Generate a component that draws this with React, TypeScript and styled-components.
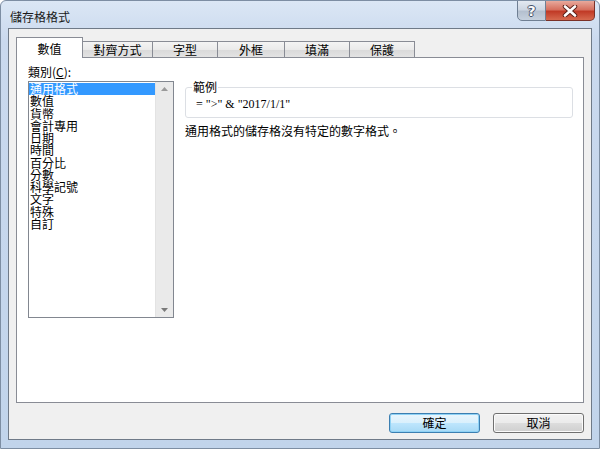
import React from "react";
import styled, { createGlobalStyle } from "styled-components";

const Global = createGlobalStyle`
  html, body { margin: 0; padding: 0; background: #ffffff; }
  body { font-family: "Noto Sans CJK TC", "Noto Sans", sans-serif; font-size: 12px; color: #000; }
  * { box-sizing: border-box; }
`;

const Window = styled.div`
  width: 600px;
  height: 449px;
  display: flex;
  flex-direction: column;
  border: 1px solid #7d8ea3;
  border-radius: 6px 6px 0 0;
  background: linear-gradient(to bottom, #dbe7f5 0px, #cad9ee 40px, #c1d4eb 100%);
  overflow: hidden;
`;

const TitleBar = styled.div`
  height: 27px;
  flex: none;
  display: flex;
  align-items: flex-start;
  justify-content: space-between;
  padding: 0 4px 0 9px;
`;

const Title = styled.div`
  font-size: 12px;
  line-height: 14px;
  margin-top: 9px;
  color: #1a1a1a;
`;

const Caption = styled.div`
  display: flex;
  margin-top: -1px;
`;

const CapButton = styled.div<{ $kind: "help" | "close" }>`
  height: 21px;
  width: ${(p) => (p.$kind === "close" ? "49px" : "29px")};
  display: flex;
  align-items: center;
  justify-content: center;
  border: 1px solid ${(p) => (p.$kind === "close" ? "#7a3128" : "#6f7f93")};
  border-left-width: ${(p) => (p.$kind === "close" ? "0" : "1px")};
  border-radius: ${(p) => (p.$kind === "close" ? "0 0 5px 0" : "0 0 0 5px")};
  background: ${(p) =>
    p.$kind === "close"
      ? "linear-gradient(to bottom, #e8a99c 0%, #d6705f 45%, #c13b27 55%, #d66a4f 100%)"
      : "linear-gradient(to bottom, #e3e9f1 0%, #cdd6e2 45%, #b4c0cf 55%, #c6d1de 100%)"};
  color: #fff;
`;

const HelpGlyph = styled.span`
  font-family: "DejaVu Sans", sans-serif;
  font-weight: bold;
  font-size: 14px;
  line-height: 14px;
  color: #fbfbfb;
  text-shadow: 1px 0 0 #46526a, -1px 0 0 #46526a, 0 1px 0 #46526a, 0 -1px 0 #46526a;
`;

const Body = styled.div`
  flex: 1;
  margin: 0 7px 8px 7px;
  border: 1px solid #6f7a88;
  background: #f0f0f0;
  padding: 8px 7px 0 7px;
  display: flex;
  flex-direction: column;
`;

const TabStrip = styled.div`
  display: flex;
  align-items: flex-end;
  height: 21px;
  position: relative;
  z-index: 1;
  margin-bottom: -1px;
`;

const Tab = styled.div<{ $active?: boolean; $w: number }>`
  width: ${(p) => p.$w}px;
  height: ${(p) => (p.$active ? "21px" : "17px")};
  margin-left: -1px;
  &:first-child { margin-left: 0; }
  display: flex;
  align-items: center;
  justify-content: center;
  border: 1px solid #898c95;
  border-bottom: ${(p) => (p.$active ? "none" : "1px solid #898c95")};
  background: ${(p) =>
    p.$active ? "#ffffff" : "linear-gradient(to bottom, #f4f4f4 0%, #eaeaea 50%, #d9d9d9 51%, #e3e3e3 100%)"};
  font-size: 12px;
  line-height: 14px;
  padding-top: ${(p) => (p.$active ? "1px" : "0")};
  position: relative;
  z-index: ${(p) => (p.$active ? 2 : 1)};
`;

const Panel = styled.div`
  height: 346px;
  border: 1px solid #898c95;
  background: #ffffff;
  padding: 7px 10px 0 11px;
  display: grid;
  grid-template-columns: 146px 1fr;
  column-gap: 11px;
  align-items: start;
`;

const LeftCol = styled.div`
  display: flex;
  flex-direction: column;
`;

const Label = styled.div`
  line-height: 14px;
  font-size: 12px;
  u { text-decoration: underline; }
`;

const ListBox = styled.div`
  margin-top: 2px;
  height: 237px;
  border: 1px solid #828790;
  display: flex;
  background: #fff;
`;

const Items = styled.div`
  flex: 1;
  padding-top: 1px;
  display: flex;
  flex-direction: column;
`;

const Item = styled.div<{ $sel?: boolean }>`
  height: 12.25px;
  line-height: 12px;
  font-size: 12px;
  padding-left: 1px;
  background: ${(p) => (p.$sel ? "#3399ff" : "transparent")};
  color: ${(p) => (p.$sel ? "#ffffff" : "#000000")};
  white-space: nowrap;
`;

const ScrollBar = styled.div`
  width: 18px;
  background: #eaeaea;
  border-left: 1px solid #e3e3e3;
  display: flex;
  flex-direction: column;
  justify-content: space-between;
  align-items: center;
  padding: 5px 0 5px;
`;

const RightCol = styled.div`
  margin-top: 15px;
  display: flex;
  flex-direction: column;
`;

const Group = styled.fieldset`
  margin: 0;
  padding: 0 6px 6px 6px;
  border: 1px solid #dcdfe4;
  border-radius: 3px;
  min-width: 0;
`;

const Legend = styled.legend`
  padding: 0 1px;
  line-height: 14px;
  font-size: 12px;
`;

const Sample = styled.div`
  margin-top: 3px;
  margin-left: 4px;
  font-family: "Liberation Serif", "Times New Roman", serif;
  font-size: 12px;
  line-height: 14px;
`;

const Desc = styled.div`
  margin-top: 6px;
  line-height: 14px;
  font-size: 12px;
`;

const ButtonRow = styled.div`
  display: flex;
  justify-content: flex-end;
  gap: 13px;
  margin-top: 10px;
`;

const Button = styled.div<{ $default?: boolean }>`
  width: 91px;
  height: 20px;
  display: flex;
  align-items: center;
  justify-content: center;
  border-radius: 3px;
  border: 1px solid ${(p) => (p.$default ? "#3c7fb1" : "#707070")};
  box-shadow: inset 0 0 0 1px ${(p) => (p.$default ? "#8fd2f5" : "#fbfbfb")};
  background: ${(p) =>
    p.$default
      ? "linear-gradient(to bottom, #eaf6fd 0%, #d9f0fc 50%, #bee6fd 51%, #a7d9f5 100%)"
      : "linear-gradient(to bottom, #f2f2f2 0%, #ebebeb 50%, #dddddd 51%, #cfcfcf 100%)"};
  font-size: 12px;
  line-height: 14px;
`;

const items = ["通用格式", "數值", "貨幣", "會計專用", "日期", "時間", "百分比", "分數", "科學記號", "文字", "特殊", "自訂"];
const tabs: [string, number][] = [
  ["數值", 67],
  ["對齊方式", 71],
  ["字型", 66],
  ["外框", 68],
  ["填滿", 66],
  ["保護", 66],
];

export default function App() {
  return (
    <>
      <Global />
      <Window>
        <TitleBar>
          <Title>儲存格格式</Title>
          <Caption>
            <CapButton $kind="help">
              <HelpGlyph>?</HelpGlyph>
            </CapButton>
            <CapButton $kind="close">
              <svg width="16" height="12" viewBox="0 0 16 12">
                <path d="M3 1.5 L13 10.5 M13 1.5 L3 10.5" stroke="#5a2018" strokeWidth="4.5" strokeLinecap="round" />
                <path d="M3 1.5 L13 10.5 M13 1.5 L3 10.5" stroke="#ffffff" strokeWidth="2.6" strokeLinecap="round" />
              </svg>
            </CapButton>
          </Caption>
        </TitleBar>
        <Body>
          <TabStrip>
            {tabs.map(([t, w], i) => (
              <Tab key={t} $active={i === 0} $w={w}>
                {t}
              </Tab>
            ))}
          </TabStrip>
          <Panel>
            <LeftCol>
              <Label>
                類別(<u>C</u>):
              </Label>
              <ListBox>
                <Items>
                  {items.map((it, i) => (
                    <Item key={it} $sel={i === 0}>
                      {it}
                    </Item>
                  ))}
                </Items>
                <ScrollBar>
                  <svg width="7" height="4" viewBox="0 0 7 4">
                    <path d="M0 4 L3.5 0 L7 4 Z" fill="#9a9a9a" />
                  </svg>
                  <svg width="7" height="4" viewBox="0 0 7 4">
                    <path d="M0 0 L3.5 4 L7 0 Z" fill="#7a7a7a" />
                  </svg>
                </ScrollBar>
              </ListBox>
            </LeftCol>
            <RightCol>
              <Group>
                <Legend>範例</Legend>
                <Sample>= "&gt;" &amp; "2017/1/1"</Sample>
              </Group>
              <Desc>通用格式的儲存格沒有特定的數字格式。</Desc>
            </RightCol>
          </Panel>
          <ButtonRow>
            <Button $default>確定</Button>
            <Button>取消</Button>
          </ButtonRow>
        </Body>
      </Window>
    </>
  );
}
